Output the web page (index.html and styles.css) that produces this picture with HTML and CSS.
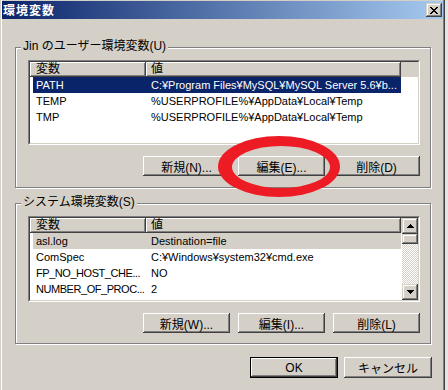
FILE: index.html
```html
<!DOCTYPE html>
<html lang="ja">
<head>
<meta charset="utf-8">
<title>環境変数</title>
<link rel="stylesheet" href="styles.css">
</head>
<body>
<div class="window">
  <div class="titlebar">
    <span class="title">環境変数</span>
    <span class="close-btn"><svg width="8" height="7" viewBox="0 0 8 7"><path d="M0 0h2v1h-2zM1 1h2v1h-2zM2 2h4v1h-4zM3 3h2v1h-2zM2 4h4v1h-4zM1 5h2v1h-2zM0 6h2v1h-2zM6 0h2v1h-2zM5 1h2v1h-2zM5 5h2v1h-2zM6 6h2v1h-2z" fill="#000"/></svg></span>
  </div>
  <div class="client">
    <div class="group">
      <div class="group-label">Jin のユーザー環境変数(U)</div>
      <div class="list">
        <div class="list-inner">
          <div class="list-body">
            <div class="header">
              <div class="hcol c1">変数</div>
              <div class="hcol c2">値</div>
              <div class="hfill"></div>
            </div>
            <div class="row sel"><span class="cell c1">PATH</span><span class="cell c2">C:¥Program Files¥MySQL¥MySQL Server 5.6¥b...</span></div>
            <div class="row"><span class="cell c1">TEMP</span><span class="cell c2">%USERPROFILE%¥AppData¥Local¥Temp</span></div>
            <div class="row"><span class="cell c1">TMP</span><span class="cell c2">%USERPROFILE%¥AppData¥Local¥Temp</span></div>
          </div>
        </div>
      </div>
      <div class="btn-row">
        <button class="btn">新規(N)...</button>
        <button class="btn">編集(E)...</button>
        <button class="btn">削除(D)</button>
      </div>
    </div>
    <div class="group">
      <div class="group-label">システム環境変数(S)</div>
      <div class="list tall">
        <div class="list-inner">
          <div class="list-body">
            <div class="header">
              <div class="hcol c1">変数</div>
              <div class="hcol c2">値</div>
              <div class="hfill"></div>
            </div>
            <div class="row sel-inactive"><span class="cell c1">asl.log</span><span class="cell c2">Destination=file</span></div>
            <div class="row"><span class="cell c1">ComSpec</span><span class="cell c2">C:¥Windows¥system32¥cmd.exe</span></div>
            <div class="row"><span class="cell c1 tight">FP_NO_HOST_CHE...</span><span class="cell c2">NO</span></div>
            <div class="row"><span class="cell c1 tight">NUMBER_OF_PROC...</span><span class="cell c2">2</span></div>
          </div>
          <div class="scrollbar">
            <div class="sb-btn"><svg width="7" height="4" viewBox="0 0 7 4"><path d="M3 0h1v1h-1zM2 1h3v1h-3zM1 2h5v1h-5zM0 3h7v1h-7z" fill="#000"/></svg></div>
            <div class="sb-thumb"></div>
            <div class="sb-track"></div>
            <div class="sb-btn"><svg width="7" height="4" viewBox="0 0 7 4"><path d="M0 0h7v1h-7zM1 1h5v1h-5zM2 2h3v1h-3zM3 3h1v1h-1z" fill="#000"/></svg></div>
          </div>
        </div>
      </div>
      <div class="btn-row">
        <button class="btn">新規(W)...</button>
        <button class="btn">編集(I)...</button>
        <button class="btn">削除(L)</button>
      </div>
    </div>
    <div class="footer">
      <button class="btn big default">OK</button>
      <button class="btn big">キャンセル</button>
    </div>
  </div>
  <svg class="annotation" width="448" height="390" viewBox="0 0 448 390"><path fill="#ED1C24" fill-rule="evenodd" d="M218 166.5a61 30.5 0 1 0 122 0a61 30.5 0 1 0 -122 0ZM232 167a49 21 0 1 0 98 0a49 21 0 1 0 -98 0Z"/></svg>
</div>
</body>
</html>
```

FILE: styles.css
```css
* { box-sizing: border-box; }
html, body { margin: 0; padding: 0; }
body {
  width: 448px;
  height: 390px;
  overflow: hidden;
  background: #e6e6e6;
  font-family: "Liberation Sans", "Noto Sans CJK JP", sans-serif;
  font-size: 12px;
  color: #000;
}
.window {
  position: relative;
  width: 445px;
  height: 390px;
  background: #D4D0C8;
  border-right: 1px solid #404040;
  box-shadow: inset -1px 0 #808080, inset 1px 0 #D4D0C8, inset 2px 0 #fff;
  padding: 1px 1px 0 2px;
  display: flex;
  flex-direction: column;
}
.titlebar {
  height: 18px;
  flex: none;
  background: linear-gradient(to right, #0A246A, #A6CAF0);
  display: flex;
  align-items: center;
  justify-content: space-between;
  padding: 0 1px;
}
.title {
  color: #fff;
  font-family: "Noto Sans CJK JP", sans-serif;
  font-weight: bold;
  font-size: 12px;
  letter-spacing: 1px;
  line-height: 18px;
}
.close-btn {
  width: 16px;
  height: 14px;
  background: #D4D0C8;
  box-shadow: inset -1px -1px #404040, inset 1px 1px #D4D0C8, inset -2px -2px #808080, inset 2px 2px #fff;
  display: flex;
  align-items: center;
  justify-content: center;
  padding-right: 1px;
}
.close-btn svg { display: block; }
.client {
  flex: 1;
  padding: 28px 12px 0 13px;
  display: flex;
  flex-direction: column;
}
.group {
  height: 141px;
  flex: none;
  border: 1px solid #808080;
  box-shadow: inset 1px 1px #fff, 1px 1px #fff;
  padding: 0 10px 0 12px;
  display: flex;
  flex-direction: column;
}
.group + .group { margin-top: 15px; }
.group-label {
  align-self: flex-start;
  margin: -8px 0 0 -7px;
  padding: 0 2px;
  height: 13px;
  line-height: 13px;
  background: #D4D0C8;
  white-space: nowrap;
}
.list {
  margin-top: 7px;
  height: 85px;
  flex: none;
  border: 1px solid;
  border-color: #808080 #fff #fff #808080;
}
.list.tall { height: 86px; }
.list-inner {
  height: 100%;
  border: 1px solid;
  border-color: #404040 #D4D0C8 #D4D0C8 #404040;
  background: #fff;
  display: flex;
  overflow: hidden;
}
.list-body { flex: 1; min-width: 0; }
.header {
  display: flex;
  height: 15px;
  background: #D4D0C8;
}
.hcol {
  height: 15px;
  line-height: 14px;
  border-right: 1px solid #404040;
  border-bottom: 1px solid #404040;
  box-shadow: inset 1px 1px #fff, inset -1px -1px #808080;
  white-space: nowrap;
}
.hcol.c1 { width: 116px; padding-left: 6px; }
.hcol.c2 { width: 255px; padding-left: 5px; }
.hfill { flex: 1; }
.row {
  display: flex;
  height: 16px;
  line-height: 16px;
  margin-left: 3px;
  width: 368px;
  font-size: 11px;
}
.cell { white-space: nowrap; overflow: hidden; }
.row .c1 { width: 113px; padding-left: 3px; }
.row .c2 { width: 255px; padding-left: 5px; }
.row .c1.tight { letter-spacing: -0.45px; }
.row.sel { background: #0A246A; color: #fff; }
.row.sel-inactive { background: #D4D0C8; }
.scrollbar {
  width: 16px;
  flex: none;
  display: flex;
  flex-direction: column;
}
.sb-btn, .sb-thumb {
  flex: none;
  background: #D4D0C8;
  box-shadow: inset -1px -1px #404040, inset 1px 1px #D4D0C8, inset -2px -2px #808080, inset 2px 2px #fff;
}
.sb-btn {
  height: 16px;
  display: flex;
  align-items: center;
  justify-content: center;
}
.sb-btn svg { display: block; }
.sb-thumb { height: 10px; }
.sb-track {
  flex: 1;
  background: repeating-conic-gradient(#D4D0C8 0 25%, #fff 0 50%) 0 0 / 2px 2px;
}
.btn-row {
  display: flex;
  justify-content: flex-end;
  gap: 8px;
  margin-top: 11px;
}
.btn {
  width: 87px;
  height: 20px;
  margin: 0;
  padding: 0;
  border: 0;
  font: inherit;
  color: #000;
  background: #D4D0C8;
  box-shadow: inset -1px -1px #404040, inset 1px 1px #fff, inset -2px -2px #808080, inset 2px 2px #D4D0C8;
  white-space: nowrap;
}
.footer {
  display: flex;
  justify-content: flex-end;
  gap: 6px;
  margin-top: 13px;
  margin-right: -1px;
}
.btn.big { width: 88px; height: 21px; }
.btn.default { border: 1px solid #000; }
.annotation {
  position: absolute;
  left: 0;
  top: 0;
  pointer-events: none;
}
```
